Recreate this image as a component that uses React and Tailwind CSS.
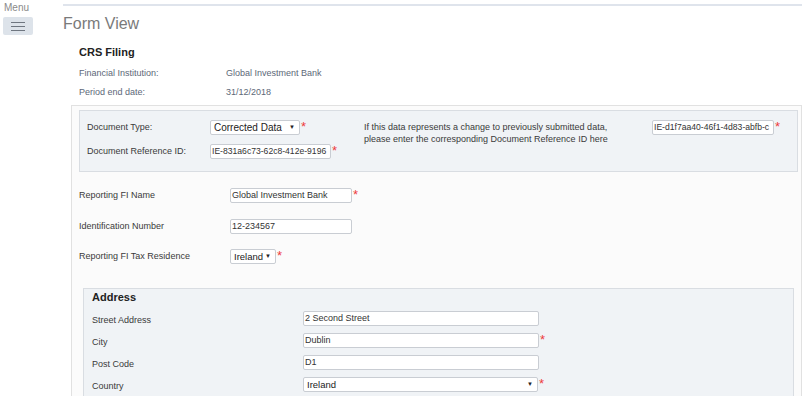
import React from 'react'

const Star = () => <span className="ml-[1px] -mt-[2px] text-[13px] leading-none text-[#ee3b3b]">*</span>

function TextBox({ value, width, star, small }) {
  return (
    <div className="flex items-center self-start">
      <div
        className={`${width} h-[15px] border border-[#c9cdd3] rounded-[2px] bg-white px-[1px] ${small ? 'text-[8.6px]' : 'text-[9px]'} leading-[13px] text-[#333] overflow-hidden whitespace-nowrap`}
      >
        {value}
      </div>
      {star && <Star />}
    </div>
  )
}

function SelectBox({ value, width, star, big }) {
  return (
    <div className="flex items-center">
      <div
        className={`${width} h-[15px] border border-[#c9cdd3] rounded-[2px] bg-white pl-[3px] pr-[4px] flex items-center justify-between ${big ? 'text-[10px]' : 'text-[9.5px]'} leading-[13px] text-[#222]`}
      >
        <span>{value}</span>
        <span className="text-[6px] text-[#222]">▼</span>
      </div>
      {star && <Star />}
    </div>
  )
}

function Row({ label, labelW, children, className }) {
  return (
    <div className={`flex items-center h-[15px] ${className || ''}`}>
      <div className={`${labelW} text-[9px] text-[#3a3a3a]`}>{label}</div>
      {children}
    </div>
  )
}

export default function App() {
  return (
    <div className="flex h-[396px] overflow-hidden bg-white font-['Liberation_Sans',Arial,sans-serif]">
      {/* Sidebar */}
      <aside className="w-[63px] shrink-0 pl-[3px]">
        <div className="pl-[1px] pt-[2px] text-[10px] leading-[12px] text-[#8a8a8a]">Menu</div>
        <button className="mt-[3px] w-[30px] h-[18px] bg-[#dde3ea] rounded-[2px] flex flex-col items-center justify-center gap-[3px]">
          <span className="block w-[14px] h-[1px] bg-[#6f7680]" />
          <span className="block w-[14px] h-[1px] bg-[#6f7680]" />
          <span className="block w-[14px] h-[1px] bg-[#6f7680]" />
        </button>
      </aside>

      {/* Main */}
      <main className="flex-1 min-w-0">
        <div className="mt-[4px] h-[2px] bg-[#dfe4ec]" />
        <h1 className="mt-[8px] text-[16px] leading-[20px] text-[#7a7a7a] font-normal">Form View</h1>

        <div className="pl-[16px]">
          <div className="mt-[11px] text-[11px] leading-[14px] font-bold text-[#222]">CRS Filing</div>
          <div className="mt-[5px] flex h-[19px] items-center text-[9px] text-[#5d6878]">
            <span className="w-[147px]">Financial Institution:</span>
            <span>Global Investment Bank</span>
          </div>
          <div className="flex h-[19px] items-center text-[9px] text-[#5d6878]">
            <span className="w-[147px]">Period end date:</span>
            <span>31/12/2018</span>
          </div>
        </div>

        {/* Outer panel */}
        <div className="mt-[3px] ml-[8px] border border-[#e1e1e1] bg-[#fbfbfb] pt-[4px] pl-[7px] pr-[3px] pb-[20px]">
          {/* Document info */}
          <div className="h-[62px] border border-[#d9dde2] bg-[#f0f3f6] pl-[7px] pt-[9px] flex items-start">
            <div className="w-[277px] flex flex-col gap-[9px]">
              <Row label="Document Type:" labelW="w-[123px]">
                <SelectBox value="Corrected Data" width="w-[90px]" star big />
              </Row>
              <Row label="Document Reference ID:" labelW="w-[123px]">
                <TextBox value="IE-831a6c73-62c8-412e-9196" width="w-[121px]" star small />
              </Row>
            </div>
            <div className="w-[288px] pt-[1px] text-[9px] leading-[12px] text-[#3a3a3a]">
              If this data represents a change to previously submitted data,
              <br />
              please enter the corresponding Document Reference ID here
            </div>
            <TextBox value="IE-d1f7aa40-46f1-4d83-abfb-c" width="w-[122px]" star small />
          </div>

          {/* Reporting FI */}
          <Row label="Reporting FI Name" labelW="w-[151px]" className="mt-[16px]">
            <TextBox value="Global Investment Bank" width="w-[122px]" star />
          </Row>
          <Row label="Identification Number" labelW="w-[151px]" className="mt-[16px]">
            <TextBox value="12-234567" width="w-[122px]" />
          </Row>
          <Row label="Reporting FI Tax Residence" labelW="w-[151px]" className="mt-[15px]">
            <SelectBox value="Ireland" width="w-[46px]" star />
          </Row>

          {/* Address */}
          <div className="mt-[24px] mx-[4px] border border-[#d9dde2] bg-[#f0f3f6] pl-[8px] pt-[1px] pb-[10px]">
            <div className="text-[11px] leading-[14px] font-bold text-[#222]">Address</div>
            <div className="mt-[7px] flex flex-col gap-[7px]">
              <Row label={<span className="relative top-[2px]">Street Address</span>} labelW="w-[211px]">
                <TextBox value="2 Second Street" width="w-[236px]" />
              </Row>
              <Row label={<span className="relative top-[2px]">City</span>} labelW="w-[211px]">
                <TextBox value="Dublin" width="w-[236px]" star />
              </Row>
              <Row label={<span className="relative top-[2px]">Post Code</span>} labelW="w-[211px]">
                <TextBox value="D1" width="w-[236px]" />
              </Row>
              <Row label={<span className="relative top-[2px]">Country</span>} labelW="w-[211px]">
                <SelectBox value="Ireland" width="w-[235px]" star />
              </Row>
            </div>
          </div>
        </div>
      </main>
    </div>
  )
}
